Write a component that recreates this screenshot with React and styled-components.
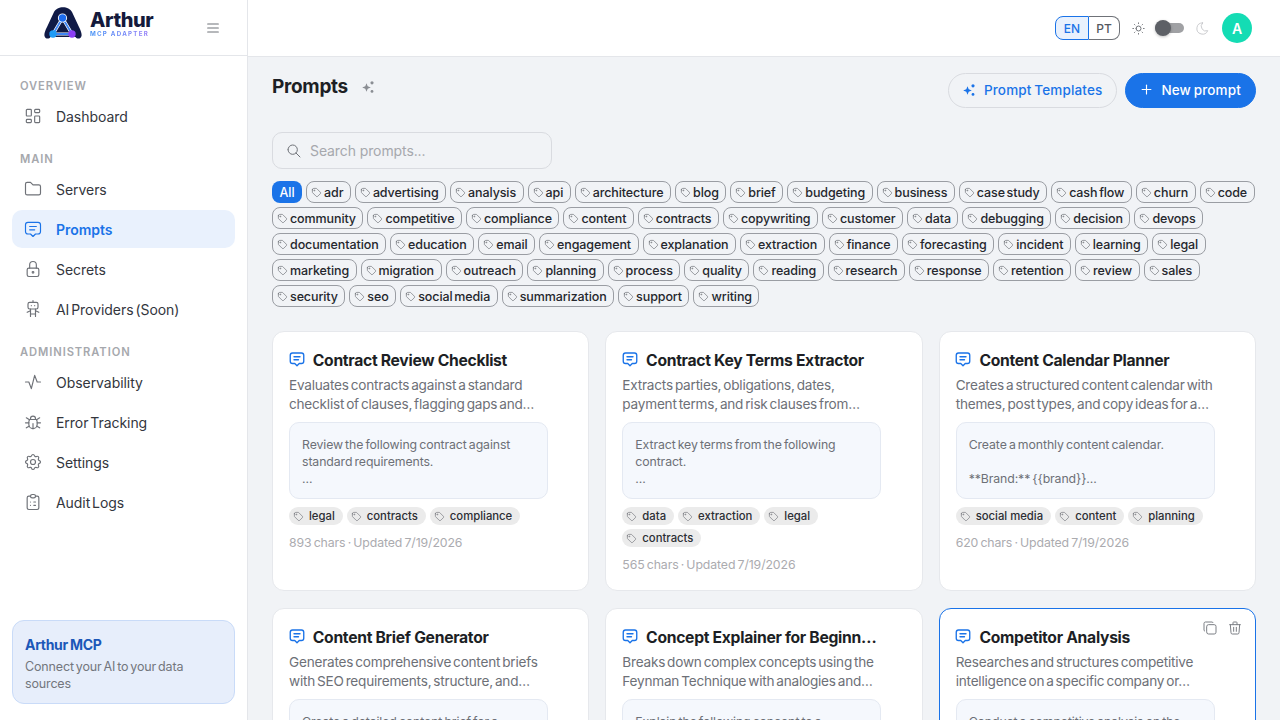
import React from "react";
import styled, { createGlobalStyle } from "styled-components";
import {
  TbLayoutDashboard,
  TbFolder,
  TbMessage2,
  TbLock,
  TbRobot,
  TbActivity,
  TbBug,
  TbSettings,
  TbClipboardList,
  TbMenu2,
  TbSearch,
  TbTag,
  TbPlus,
  TbSun,
  TbMoon,
  TbCopy,
  TbTrash,
} from "react-icons/tb";

const GlobalStyle = createGlobalStyle`
  * { box-sizing: border-box; }
  html, body { margin: 0; height: 100%; overflow: hidden; }
  body {
    font-family: Inter, "Liberation Sans", sans-serif;
    color: #1f2128;
    background: #f1f3f6;
  }
`;

const filterTags = [
  ["adr", "advertising", "analysis", "api", "architecture", "blog", "brief", "budgeting", "business", "case study", "cash flow", "churn", "code"],
  ["community", "competitive", "compliance", "content", "contracts", "copywriting", "customer", "data", "debugging", "decision", "devops"],
  ["documentation", "education", "email", "engagement", "explanation", "extraction", "finance", "forecasting", "incident", "learning", "legal"],
  ["marketing", "migration", "outreach", "planning", "process", "quality", "reading", "research", "response", "retention", "review", "sales"],
  ["security", "seo", "social media", "summarization", "support", "writing"],
];

const prompts = [
  {
    title: "Contract Review Checklist",
    desc: ["Evaluates contracts against a standard", "checklist of clauses, flagging gaps and…"],
    body: ["Review the following contract against", "standard requirements.", "..."],
    tags: [["legal", "contracts", "compliance"]],
    meta: "893 chars · Updated 7/19/2026",
  },
  {
    title: "Contract Key Terms Extractor",
    desc: ["Extracts parties, obligations, dates,", "payment terms, and risk clauses from…"],
    body: ["Extract key terms from the following", "contract.", "..."],
    tags: [["data", "extraction", "legal"], ["contracts"]],
    meta: "565 chars · Updated 7/19/2026",
  },
  {
    title: "Content Calendar Planner",
    desc: ["Creates a structured content calendar with", "themes, post types, and copy ideas for a…"],
    body: ["Create a monthly content calendar.", "\u00a0", "**Brand:** {{brand}}..."],
    tags: [["social media", "content", "planning"]],
    meta: "620 chars · Updated 7/19/2026",
  },
  {
    title: "Content Brief Generator",
    desc: ["Generates comprehensive content briefs", "with SEO requirements, structure, and…"],
    body: ["Create a detailed content brief for a", "\u00a0", "..."],
    tags: [["content", "brief"]],
    meta: "702 chars · Updated 7/19/2026",
  },
  {
    title: "Concept Explainer for Beginn…",
    desc: ["Breaks down complex concepts using the", "Feynman Technique with analogies and…"],
    body: ["Explain the following concept to a", "\u00a0", "..."],
    tags: [["learning", "explanation"]],
    meta: "540 chars · Updated 7/19/2026",
  },
  {
    title: "Competitor Analysis",
    desc: ["Researches and structures competitive", "intelligence on a specific company or…"],
    body: ["Conduct a competitive analysis on the", "\u00a0", "..."],
    tags: [["competitive", "research"]],
    meta: "811 chars · Updated 7/19/2026",
    hovered: true,
  },
];

const navGroups = [
  { label: "OVERVIEW", items: [{ name: "Dashboard", icon: TbLayoutDashboard }] },
  {
    label: "MAIN",
    items: [
      { name: "Servers", icon: TbFolder },
      { name: "Prompts", icon: TbMessage2, active: true },
      { name: "Secrets", icon: TbLock },
      { name: "AI Providers (Soon)", icon: TbRobot },
    ],
  },
  {
    label: "ADMINISTRATION",
    items: [
      { name: "Observability", icon: TbActivity },
      { name: "Error Tracking", icon: TbBug },
      { name: "Settings", icon: TbSettings },
      { name: "Audit Logs", icon: TbClipboardList },
    ],
  },
];

const Layout = styled.div`
  display: grid;
  grid-template-columns: 248px 1fr;
  height: 100vh;
  overflow: hidden;
`;

const Sidebar = styled.aside`
  display: flex;
  flex-direction: column;
  height: 100vh;
  background: #fff;
  border-right: 1px solid #e4e6ea;
`;

const SidebarTop = styled.div`
  display: flex;
  align-items: center;
  justify-content: space-between;
  height: 56px;
  flex-shrink: 0;
  padding: 0 26px 0 44px;
  border-bottom: 1px solid #e4e6ea;
  color: #6f7278;
`;

const LogoWrap = styled.div`
  display: flex;
  align-items: center;
  gap: 8px;
  margin-top: -9px;
`;

const LogoText = styled.div`
  display: flex;
  flex-direction: column;
`;

const LogoName = styled.span`
  font-size: 20px;
  line-height: 20px;
  font-weight: 800;
  letter-spacing: -0.4px;
  color: #141a3c;
`;

const LogoSub = styled.span`
  font-size: 6.2px;
  line-height: 7px;
  font-weight: 700;
  letter-spacing: 1.25px;
  background: linear-gradient(90deg, #3f8ff5, #9b7cf8);
  -webkit-background-clip: text;
  background-clip: text;
  color: transparent;
`;

const Nav = styled.nav`
  flex: 1;
  padding: 20px 12px 0;
`;

const NavLabel = styled.div`
  font-size: 11.2px;
  line-height: 20px;
  font-weight: 600;
  letter-spacing: 0.9px;
  color: #a6a8ad;
  padding-left: 8px;
  margin-top: ${(p) => (p.$first ? "0" : "14px")};
  margin-bottom: 1px;
`;

const NavItem = styled.a`
  display: flex;
  align-items: center;
  gap: 13px;
  height: 38px;
  margin-bottom: 2px;
  padding-left: 11px;
  border-radius: 10px;
  font-size: 14px;
  font-weight: ${(p) => (p.$active ? 600 : 400)};
  letter-spacing: -0.05px;
  word-spacing: -2px;
  color: ${(p) => (p.$active ? "#1a73e8" : "#33363d")};
  background: ${(p) => (p.$active ? "#e9f1fd" : "transparent")};
  svg {
    color: ${(p) => (p.$active ? "#1a73e8" : "#6f7278")};
    flex-shrink: 0;
  }
`;

const Promo = styled.div`
  margin: 0 12px 16px;
  height: 84px;
  padding: 14px 12px;
  border-radius: 12px;
  background: #e7eefb;
  border: 1px solid #c9dbf8;
`;

const PromoTitle = styled.div`
  font-size: 14px;
  line-height: 20px;
  font-weight: 700;
  letter-spacing: -0.3px;
  word-spacing: -1px;
  color: #1b57b8;
`;

const PromoText = styled.div`
  margin-top: 3px;
  font-size: 12.5px;
  line-height: 17px;
  letter-spacing: -0.15px;
  word-spacing: -1.4px;
  color: #73767d;
`;

const Main = styled.main`
  display: flex;
  flex-direction: column;
  height: 100vh;
  overflow: hidden;
  min-width: 0;
`;

const Topbar = styled.header`
  display: flex;
  align-items: center;
  justify-content: flex-end;
  height: 57px;
  flex-shrink: 0;
  padding: 0 28px 0 0;
  background: #fff;
  border-bottom: 1px solid #e4e6ea;
`;

const LangGroup = styled.div`
  display: flex;
  height: 24px;
  margin-right: 11px;
`;

const LangButton = styled.span`
  display: flex;
  align-items: center;
  justify-content: center;
  width: ${(p) => (p.$active ? "34px" : "31px")};
  font-size: 12px;
  font-weight: 500;
  color: ${(p) => (p.$active ? "#1a73e8" : "#55585f")};
  background: ${(p) => (p.$active ? "#e9f1fd" : "#fff")};
  border: 1px solid ${(p) => (p.$active ? "#1a73e8" : "#6f7278")};
  border-radius: ${(p) => (p.$active ? "8px 0 0 8px" : "0 8px 8px 0")};
  border-left-width: ${(p) => (p.$active ? "1px" : "0")};
`;

const ThemeSwitch = styled.div`
  display: flex;
  align-items: center;
  gap: 9px;
  margin-right: 12px;
`;

const Track = styled.div`
  position: relative;
  width: 29px;
  height: 10px;
  margin-right: 2px;
  border-radius: 5px;
  background: #a0a1a4;
`;

const Thumb = styled.span`
  position: absolute;
  left: 0;
  top: -3px;
  width: 16px;
  height: 16px;
  border-radius: 50%;
  background: #5d6066;
  box-shadow: 0 1px 3px rgba(0, 0, 0, 0.25);
`;

const Avatar = styled.div`
  display: flex;
  align-items: center;
  justify-content: center;
  width: 30px;
  height: 30px;
  border-radius: 50%;
  background: #14dcb4;
  color: #fff;
  font-size: 14px;
  font-weight: 600;
`;

const Content = styled.div`
  padding: 16px 24px 0;
`;

const PageHead = styled.div`
  display: flex;
  align-items: center;
  justify-content: space-between;
  height: 35px;
`;

const TitleRow = styled.div`
  display: flex;
  align-items: center;
  gap: 13px;
  margin-top: -8px;
  color: #8a8d93;
`;

const PageTitle = styled.h1`
  margin: 0;
  font-size: 19px;
  line-height: 28px;
  font-weight: 700;
  letter-spacing: -0.3px;
  color: #1d1f25;
`;

const HeadActions = styled.div`
  display: flex;
  gap: 8px;
`;

const Pill = styled.button`
  display: flex;
  align-items: center;
  gap: ${(p) => (p.$primary ? "7px" : "8px")};
  height: 35px;
  padding: 0 14px 2px 13px;
  border-radius: 18px;
  font-family: inherit;
  font-size: 13.5px;
  font-weight: 500;
  letter-spacing: 0.15px;
  word-spacing: -1px;
  color: ${(p) => (p.$primary ? "#fff" : "#1a73e8")};
  background: ${(p) => (p.$primary ? "#1a73e8" : "transparent")};
  border: 1px solid ${(p) => (p.$primary ? "#1a73e8" : "#d9dbe0")};
`;

const SearchBox = styled.div`
  display: flex;
  align-items: center;
  gap: 8px;
  width: 280px;
  height: 37px;
  margin-top: 24px;
  padding: 0 13px;
  border: 1px solid #d9dbe0;
  border-radius: 10px;
  color: #6f7278;
`;

const SearchText = styled.span`
  font-size: 14px;
  letter-spacing: -0.1px;
  color: #a6a8ad;
`;

const FilterRows = styled.div`
  display: flex;
  flex-direction: column;
  gap: 4px;
  margin-top: 12px;
`;

const FilterRow = styled.div`
  display: flex;
  gap: 4px;
`;

const FilterChip = styled.span`
  display: flex;
  align-items: center;
  flex-shrink: 0;
  gap: 2px;
  height: 22px;
  padding: 0 6.5px 0 4px;
  font-size: 12.5px;
  font-weight: 500;
  letter-spacing: -0.1px;
  word-spacing: -1.5px;
  white-space: nowrap;
  color: #25272d;
  border: 1px solid #9a9da3;
  border-radius: 8px;
  svg {
    color: #6f7278;
    flex-shrink: 0;
  }
`;

const AllChip = styled.span`
  display: flex;
  align-items: center;
  justify-content: center;
  flex-shrink: 0;
  width: 30px;
  height: 22px;
  font-size: 12.5px;
  font-weight: 500;
  color: #fff;
  background: #1a73e8;
  border-radius: 8px;
`;

const CardGrid = styled.div`
  display: grid;
  grid-template-columns: repeat(3, 1fr);
  gap: 17px 16px;
  margin-top: 24px;
`;

const Card = styled.article`
  position: relative;
  padding: 16px;
  background: #fff;
  border: 1px solid ${(p) => (p.$hovered ? "#1a73e8" : "#e6e8ec")};
  border-radius: 12px;
  min-height: 260px;
`;

const CardActions = styled.div`
  position: absolute;
  top: 11px;
  right: 12px;
  display: flex;
  gap: 9px;
  color: #7b7e84;
`;

const CardHead = styled.div`
  display: flex;
  align-items: center;
  gap: 7px;
  height: 24px;
  margin-top: 1px;
  svg {
    color: #1a73e8;
    margin: -5px 0 0 -1.25px;
    flex-shrink: 0;
  }
`;

const CardTitle = styled.h3`
  margin: 0;
  font-size: 15.7px;
  line-height: 24px;
  font-weight: 700;
  letter-spacing: -0.3px;
  white-space: nowrap;
  color: #1d1f25;
`;

const CardDesc = styled.div`
  margin-top: 3px;
  font-size: 13.6px;
  line-height: 19px;
  letter-spacing: -0.22px;
  word-spacing: -1.6px;
  color: #6d7077;
`;

const TextLine = styled.div`
  white-space: nowrap;
`;

const PromptBox = styled.div`
  width: 259px;
  margin-top: 8px;
  padding: 13px 12px 11px;
  font-size: 12.3px;
  line-height: 17px;
  letter-spacing: -0.1px;
  word-spacing: -1.2px;
  color: #6d7077;
  background: #f5f8fd;
  border: 1px solid #e4e9f2;
  border-radius: 10px;
`;

const TagRow = styled.div`
  display: flex;
  gap: 4px;
  margin-top: 4px;
  ${PromptBox} + & {
    margin-top: 8px;
  }
`;

const CardTag = styled.span`
  display: flex;
  align-items: center;
  gap: 5px;
  height: 18px;
  padding: 0 8px 0 4px;
  font-size: 11.3px;
  font-weight: 500;
  color: #2c2e34;
  background: #ebebeb;
  border-radius: 9px;
  svg {
    color: #77797f;
  }
`;

const Meta = styled.div`
  margin-top: 9px;
  font-size: 12.3px;
  line-height: 18px;
  letter-spacing: -0.1px;
  word-spacing: -1.2px;
  color: #ababaf;
`;

const Logo = () => (
  <svg width="38" height="32" viewBox="0 0 38 32" fill="none">
    <path
      d="M0.5 29C0 27 1 24 3 20L10 5C13 -1.5 25 -1.5 28 5L35 20C37 24 38 27 37.5 29C37 32 33 32.5 31.5 30L19 30L6.5 30C5 32.5 1 32 0.5 29Z"
      fill="#101a46"
    />
    <path d="M18.5 11L9 27H28Z" stroke="#ffffff" strokeWidth="3.2" strokeLinejoin="round" />
    <path d="M18.5 11L9 27H28Z" stroke="#3f86f5" strokeWidth="1.8" strokeLinejoin="round" />
    <circle cx="18.5" cy="11" r="4.6" fill="#ffffff" />
    <circle cx="18.5" cy="11" r="3.7" fill="#1d6cf0" />
    <circle cx="9" cy="27" r="3.7" fill="#1e9bf5" />
    <circle cx="28" cy="27" r="3.7" fill="#8a3ff5" />
  </svg>
);

const Sparkle = ({ size = 14 }) => (
  <svg width={size} height={size} viewBox="0 0 14 14" fill="currentColor">
    <path d="M5.5 3.2 6.7 6.3 9.8 7.5 6.7 8.7 5.5 11.8 4.3 8.7 1.2 7.5 4.3 6.3Z" />
    <circle cx="11" cy="2.8" r="1.6" />
    <circle cx="11" cy="11.4" r="1.4" />
  </svg>
);

const Tag = ({ size = 11 }) => <TbTag size={size} strokeWidth={1.5} />;

const PromptCard = ({ prompt }) => (
  <Card $hovered={prompt.hovered}>
    {prompt.hovered && (
      <CardActions>
        <TbCopy size={16} strokeWidth={1.5} />
        <TbTrash size={16} strokeWidth={1.5} />
      </CardActions>
    )}
    <CardHead>
      <TbMessage2 size={18} strokeWidth={1.8} />
      <CardTitle>{prompt.title}</CardTitle>
    </CardHead>
    <CardDesc>
      {prompt.desc.map((line) => (
        <TextLine key={line}>{line}</TextLine>
      ))}
    </CardDesc>
    <PromptBox>
      {prompt.body.map((line, i) => (
        <TextLine key={i}>{line}</TextLine>
      ))}
    </PromptBox>
    {prompt.tags.map((row, i) => (
      <TagRow key={i}>
        {row.map((tag) => (
          <CardTag key={tag}>
            <Tag />
            {tag}
          </CardTag>
        ))}
      </TagRow>
    ))}
    <Meta>{prompt.meta}</Meta>
  </Card>
);

export default function App() {
  return (
    <>
      <GlobalStyle />
      <Layout>
        <Sidebar>
          <SidebarTop>
            <LogoWrap>
              <Logo />
              <LogoText>
                <LogoName>Arthur</LogoName>
                <LogoSub>MCP ADAPTER</LogoSub>
              </LogoText>
            </LogoWrap>
            <TbMenu2 size={16} strokeWidth={1.7} />
          </SidebarTop>
          <Nav>
            {navGroups.map((group, i) => (
              <div key={group.label}>
                <NavLabel $first={i === 0}>{group.label}</NavLabel>
                {group.items.map((item) => (
                  <NavItem key={item.name} $active={item.active}>
                    <item.icon size={20} strokeWidth={1.4} />
                    {item.name}
                  </NavItem>
                ))}
              </div>
            ))}
          </Nav>
          <Promo>
            <PromoTitle>Arthur MCP</PromoTitle>
            <PromoText>Connect your AI to your data sources</PromoText>
          </Promo>
        </Sidebar>
        <Main>
          <Topbar>
            <LangGroup>
              <LangButton $active>EN</LangButton>
              <LangButton>PT</LangButton>
            </LangGroup>
            <ThemeSwitch>
              <TbSun size={15} strokeWidth={1.4} color="#5d6066" />
              <Track>
                <Thumb />
              </Track>
              <TbMoon size={15} strokeWidth={1.4} color="#c4c5c8" />
            </ThemeSwitch>
            <Avatar>A</Avatar>
          </Topbar>
          <Content>
            <PageHead>
              <TitleRow>
                <PageTitle>Prompts</PageTitle>
                <Sparkle />
              </TitleRow>
              <HeadActions>
                <Pill>
                  <Sparkle />
                  Prompt Templates
                </Pill>
                <Pill $primary>
                  <TbPlus size={15} strokeWidth={1.8} />
                  New prompt
                </Pill>
              </HeadActions>
            </PageHead>
            <SearchBox>
              <TbSearch size={16} strokeWidth={1.5} />
              <SearchText>Search prompts...</SearchText>
            </SearchBox>
            <FilterRows>
              {filterTags.map((row, i) => (
                <FilterRow key={i}>
                  {i === 0 && <AllChip>All</AllChip>}
                  {row.map((tag) => (
                    <FilterChip key={tag}>
                      <Tag />
                      {tag}
                    </FilterChip>
                  ))}
                </FilterRow>
              ))}
            </FilterRows>
            <CardGrid>
              {prompts.map((p) => (
                <PromptCard key={p.title} prompt={p} />
              ))}
            </CardGrid>
          </Content>
        </Main>
      </Layout>
    </>
  );
}
